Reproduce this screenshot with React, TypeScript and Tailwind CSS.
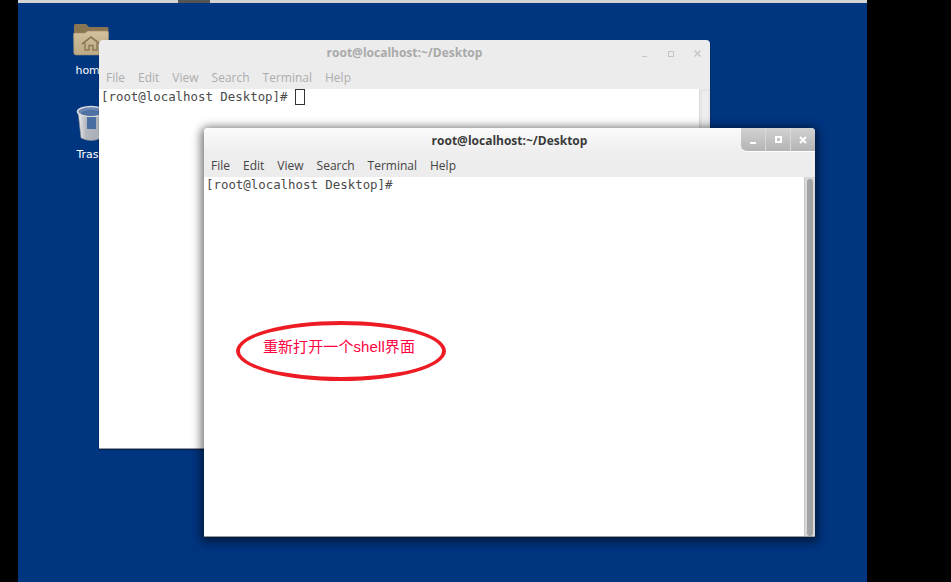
const menuItems = ['File', 'Edit', 'View', 'Search', 'Terminal', 'Help'];

function FolderIcon() {
  return (
    <svg width="36" height="36" viewBox="0 0 36 36">
      <defs>
        <linearGradient id="folderFace" x1="0" y1="0" x2="0" y2="1">
          <stop offset="0" stopColor="#d3c09c" />
          <stop offset="1" stopColor="#bba884" />
        </linearGradient>
      </defs>
      <path d="M1 3.5 Q1 2 2.5 2 H13 L16 5 H34 Q35.5 5 35.5 6.5 V14 H1 Z" fill="#8a7552" />
      <path d="M0.5 12 Q0.5 11 2 11 H12 L15 9 H34 Q35.5 9 35.5 10.5 V31 Q35.5 33 33.5 33 H3 Q1 33 0.8 31 Z" fill="url(#folderFace)" stroke="#a08c68" strokeWidth="0.6" />
      <path d="M9 22 L18 15 L27 22" fill="none" stroke="#8a7855" strokeWidth="1.6" />
      <path d="M12 21 V28 H16 V23.5 H20 V28 H24 V21" fill="none" stroke="#8a7855" strokeWidth="1.4" />
    </svg>
  );
}

function TrashIcon() {
  return (
    <svg width="30" height="38" viewBox="0 0 30 38">
      <defs>
        <linearGradient id="trashBody" x1="0" y1="0" x2="1" y2="0">
          <stop offset="0" stopColor="#f0f0f0" />
          <stop offset="0.3" stopColor="#b4b8be" />
          <stop offset="0.7" stopColor="#a9afb8" />
          <stop offset="1" stopColor="#dcdcdc" />
        </linearGradient>
      </defs>
      <path d="M2 6 L5 33 Q15 38 25 33 L28 6 Z" fill="url(#trashBody)" stroke="#8b8b8b" strokeWidth="0.6" />
      <ellipse cx="15" cy="6.5" rx="13.5" ry="5" fill="#6b87b3" stroke="#dadada" strokeWidth="1.6" />
      <ellipse cx="15" cy="8" rx="10" ry="3" fill="#4f71a4" />
      <rect x="11" y="12" width="9" height="12" fill="#2f5c9c" opacity="0.8" />
    </svg>
  );
}

function DesktopIcon({ label, children }: { label: string; children: React.ReactNode }) {
  return (
    <div className="flex w-[50px] flex-col items-center">
      <div className="flex h-[38px] items-center justify-center">{children}</div>
      <span className="mt-[5px] text-[11px] leading-[14px] text-white [font-family:'DejaVu_Sans',sans-serif]">{label}</span>
    </div>
  );
}

function Scrollbar({ active }: { active?: boolean }) {
  return (
    <div className={`flex w-[11px] shrink-0 justify-center border-l pt-[2px] ${active ? 'border-[#c9c9c9] bg-[#d9d9d9]' : 'border-[#dcdcdc] bg-[#e6e6e6]'}`}>
      <div className={`h-full w-[6px] rounded-full ${active ? 'bg-[#a3a3a3]' : 'bg-[#eeeeee]'}`} />
    </div>
  );
}

function Terminal({ active, className }: { active?: boolean; className: string }) {
  const menuColor = active ? 'text-[#444444]' : 'text-[#adadad]';
  return (
    <div className={`absolute flex h-[409px] w-[611px] flex-col overflow-hidden rounded-t-[4px] border-b border-[#999] ${active ? 'shadow-[0_2px_10px_3px_rgba(0,0,0,0.55)]' : 'shadow-[0_1px_2px_rgba(0,0,0,0.4)]'} ${className}`}>
      <div className={`relative h-[49px] shrink-0 ${active ? 'bg-gradient-to-b from-[#fbfbfb] via-[#eeeeee] to-[#ececec]' : 'bg-[#ececec]'}`}>
        <div className={`pt-[5px] text-center text-[12px] font-bold leading-[16px] [font-family:'Open_Sans',sans-serif] ${active ? 'text-[#3a3a3a]' : 'text-[#a9a9a9]'}`}>
          root@localhost:~/Desktop
        </div>
        <div className={`mt-[8px] flex gap-[13px] pl-[7px] text-[12px] leading-[18px] [font-family:'Open_Sans',sans-serif] ${menuColor}`}>
          {menuItems.map((item) => (
            <span key={item}>{item}</span>
          ))}
        </div>
        {active ? (
          <div className="absolute top-0 right-0 flex h-[24px] w-[74px] rounded-bl-[6px] border-b border-white bg-gradient-to-b from-[#d2d2d2] to-[#b4b4b4]">
            <div className="flex flex-1 items-end justify-center border-r border-[#d8d8d8] pb-[7px]">
              <div className="h-[2px] w-[6px] bg-white" />
            </div>
            <div className="flex flex-1 items-center justify-center border-r border-[#d8d8d8]">
              <div className="h-[7px] w-[7px] border-2 border-white" />
            </div>
            <div className="flex flex-1 items-center justify-center text-[12px] font-bold leading-none text-white">
              <svg width="8" height="8" viewBox="0 0 8 8">
                <path d="M1 1 L7 7 M7 1 L1 7" stroke="#fff" strokeWidth="2" />
              </svg>
            </div>
          </div>
        ) : (
          <div className="absolute top-[10px] right-[9px] flex w-[59px] items-center justify-between">
            <div className="mt-[6px] h-[1px] w-[5px] bg-[#c4c4c4]" />
            <div className="h-[6px] w-[6px] border border-[#c4c4c4]" />
            <svg width="7" height="7" viewBox="0 0 7 7">
              <path d="M0.5 0.5 L6.5 6.5 M6.5 0.5 L0.5 6.5" stroke="#c4c4c4" strokeWidth="1.3" />
            </svg>
          </div>
        )}
      </div>
      <div className="flex min-h-0 flex-1 bg-white">
        <div className="flex-1 pl-[2px] text-[12.4px] leading-[15px] text-[#4a4a4a] [font-family:'DejaVu_Sans_Mono',monospace]">
          [root@localhost Desktop]#
          {!active && <span className="ml-[7px] inline-block h-[16px] w-[10px] border border-[#333] align-top" />}
        </div>
        <Scrollbar active={active} />
      </div>
    </div>
  );
}

export default function App() {
  return (
    <div className="flex h-[582px] w-[951px] overflow-hidden bg-black">
      <div className="relative ml-[18px] h-full w-[849px] bg-[#003580]">
        <div className="h-[3px] bg-[#d4d4d4]">
          <div className="ml-[160px] h-full w-[32px] bg-[#555555]" />
        </div>
        <div className="absolute top-[21px] left-[48px] flex flex-col gap-[27px]">
          <DesktopIcon label="home">
            <FolderIcon />
          </DesktopIcon>
          <DesktopIcon label="Trash">
            <TrashIcon />
          </DesktopIcon>
        </div>
        <Terminal className="top-[40px] left-[81px]" />
        <Terminal active className="top-[128px] left-[186px]" />
        <div className="absolute top-[321px] left-[218px] flex h-[60px] w-[210px] items-center justify-center rounded-[50%] border-[4px] border-[#ed1c24] pr-[4px] pb-[9px] text-[15px] leading-[18px] tracking-[0.1px] text-[#ff0040] [font-family:'Liberation_Sans','Noto_Sans_CJK_SC',sans-serif]">
          重新打开一个shell界面
        </div>
      </div>
    </div>
  );
}
